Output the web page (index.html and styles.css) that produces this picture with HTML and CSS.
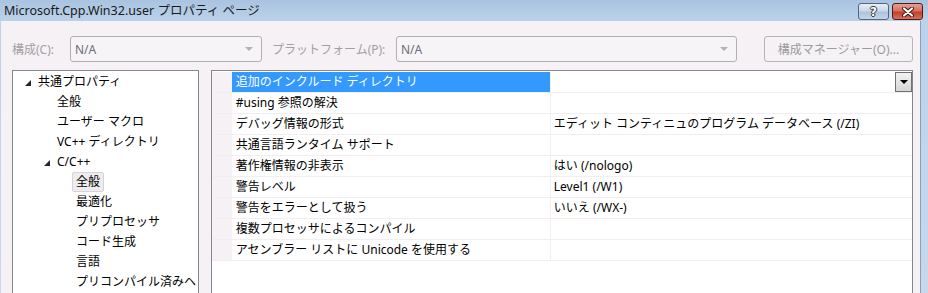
FILE: index.html
```html
<!DOCTYPE html>
<html lang="ja">
<head>
    <meta charset="UTF-8">
    <title>Microsoft.Cpp.Win32.user プロパティ ページ</title>
    <link rel="stylesheet" href="styles.css">
</head>
<body>
    <div class="window">
        <div class="titlebar">
            <span class="title">Microsoft.Cpp.Win32.user プロパティ ページ</span>
            <div class="caption-buttons">
                <button class="cap-btn help">?</button>
                <button class="cap-btn close">
                    <svg width="14" height="10" viewBox="0 0 14 10">
                        <path d="M3 1.5 L11 8.5 M11 1.5 L3 8.5" stroke="#3a1410" stroke-width="4" stroke-linecap="round"/>
                        <path d="M3 1.5 L11 8.5 M11 1.5 L3 8.5" stroke="#fff" stroke-width="2.2" stroke-linecap="round"/>
                    </svg>
                </button>
            </div>
        </div>
        <div class="client">
            <div class="toolbar">
                <span class="label config-label">構成(C):</span>
                <div class="combo config"><span>N/A</span><i class="arrow"></i></div>
                <span class="label platform-label">プラットフォーム(P):</span>
                <div class="combo platform"><span>N/A</span><i class="arrow"></i></div>
                <button class="manager">構成マネージャー(O)...</button>
            </div>
            <div class="panels">
                <div class="tree">
                    <div class="node lvl0"><i class="slot expander"></i>共通プロパティ</div>
                    <div class="node lvl1"><i class="slot"></i>全般</div>
                    <div class="node lvl1"><i class="slot"></i>ユーザー マクロ</div>
                    <div class="node lvl1"><i class="slot"></i>VC++ ディレクトリ</div>
                    <div class="node lvl1"><i class="slot expander"></i>C/C++</div>
                    <div class="node lvl2"><i class="slot"></i><span class="current">全般</span></div>
                    <div class="node lvl2"><i class="slot"></i>最適化</div>
                    <div class="node lvl2"><i class="slot"></i>プリプロセッサ</div>
                    <div class="node lvl2"><i class="slot"></i>コード生成</div>
                    <div class="node lvl2"><i class="slot"></i>言語</div>
                    <div class="node lvl2"><i class="slot"></i>プリコンパイル済みヘ</div>
                </div>
                <div class="grid">
                    <div class="rows">
                        <div class="row selected">
                            <div class="gutter"></div>
                            <div class="name">追加のインクルード ディレクトリ</div>
                            <div class="value"><button class="drop"><i></i></button></div>
                        </div>
                        <div class="row">
                            <div class="gutter"></div>
                            <div class="name">#using 参照の解決</div>
                            <div class="value"></div>
                        </div>
                        <div class="row">
                            <div class="gutter"></div>
                            <div class="name">デバッグ情報の形式</div>
                            <div class="value">エディット コンティニュのプログラム データベース (/ZI)</div>
                        </div>
                        <div class="row">
                            <div class="gutter"></div>
                            <div class="name">共通言語ランタイム サポート</div>
                            <div class="value"></div>
                        </div>
                        <div class="row">
                            <div class="gutter"></div>
                            <div class="name">著作権情報の非表示</div>
                            <div class="value">はい (/nologo)</div>
                        </div>
                        <div class="row">
                            <div class="gutter"></div>
                            <div class="name">警告レベル</div>
                            <div class="value">Level1 (/W1)</div>
                        </div>
                        <div class="row">
                            <div class="gutter"></div>
                            <div class="name">警告をエラーとして扱う</div>
                            <div class="value">いいえ (/WX-)</div>
                        </div>
                        <div class="row">
                            <div class="gutter"></div>
                            <div class="name">複数プロセッサによるコンパイル</div>
                            <div class="value"></div>
                        </div>
                        <div class="row">
                            <div class="gutter"></div>
                            <div class="name">アセンブラー リストに Unicode を使用する</div>
                            <div class="value"></div>
                        </div>
                    </div>
                </div>
            </div>
        </div>
    </div>
</body>
</html>
```

FILE: styles.css
```css
body {
    margin: 0;
    padding: 0;
    font-family: "Noto Sans", "Noto Sans CJK JP", sans-serif;
    font-size: 12px;
    color: #000;
    overflow: hidden;
}

.window {
    width: 928px;
    height: 293px;
    display: flex;
    flex-direction: column;
    background: linear-gradient(to bottom, #a9c3e0 0, #bcd2ea 21px, #c7d8ec 100%);
    overflow: hidden;
}

.titlebar {
    height: 21px;
    flex: none;
    display: flex;
    align-items: center;
    padding-left: 4px;
}

.title {
    color: #1a1a1a;
    font-size: 12.5px;
    line-height: 21px;
    white-space: nowrap;
}

.caption-buttons {
    margin-left: auto;
    display: flex;
    gap: 3px;
    padding-right: 5px;
    align-self: flex-start;
    padding-top: 3px;
}

.cap-btn {
    width: 31px;
    height: 17px;
    border: 1px solid #55657c;
    border-radius: 3px;
    padding: 0;
    display: flex;
    align-items: center;
    justify-content: center;
    box-sizing: border-box;
}

.help {
    background: linear-gradient(to bottom, #e7eef7 0%, #c9d8ea 45%, #aec3dc 55%, #c3d5ea 100%);
    color: #fff;
    font-family: "DejaVu Sans", sans-serif;
    font-weight: bold;
    font-size: 12px;
    line-height: 14px;
    text-shadow: 1px 0 #333, -1px 0 #333, 0 1px #333, 0 -1px #333;
}

.close {
    border-color: #4f1c16;
    background: linear-gradient(to bottom, #e6a093 0%, #d8705f 45%, #c4402c 55%, #d6705c 100%);
}

.client {
    flex: 1;
    background: #f5f1f5;
    margin-left: 1px;
    margin-right: 7px;
    border-right: 1px solid #8e9fb5;
    padding: 15px 7px 0 11px;
    display: flex;
    flex-direction: column;
    min-height: 0;
}

.toolbar {
    display: flex;
    align-items: center;
    height: 26px;
    flex: none;
}

.label {
    color: #a3a0a3;
    white-space: nowrap;
}

.config-label {
    width: 58px;
}

.combo {
    height: 26px;
    box-sizing: border-box;
    border: 1px solid #b2afb2;
    border-radius: 3px;
    background: #f7f4f7;
    display: flex;
    align-items: center;
    padding-left: 4px;
    color: #6e6e78;
}

.combo.config {
    width: 192px;
}

.platform-label {
    margin-left: 10px;
    width: 124px;
}

.combo.platform {
    width: 341px;
}

.arrow {
    margin-left: auto;
    margin-right: 8px;
    width: 0;
    height: 0;
    border-left: 4px solid transparent;
    border-right: 4px solid transparent;
    border-top: 4px solid #b4b1b4;
}

.manager {
    margin-left: 27px;
    width: 149px;
    height: 26px;
    border: 1px solid #b7b4b7;
    border-radius: 3px;
    background: #f5f2f5;
    color: #9d9a9d;
    font-family: inherit;
    font-size: 12px;
    padding: 0;
}

.panels {
    display: flex;
    margin-top: 8px;
    gap: 12px;
    flex: 1;
    min-height: 0;
}

.tree {
    width: 187px;
    box-sizing: border-box;
    border: 1px solid #828790;
    border-bottom: none;
    background: #fff;
    padding-top: 1px;
    overflow: hidden;
}

.node {
    height: 20px;
    line-height: 20px;
    white-space: nowrap;
    display: flex;
    align-items: center;
}

.lvl0 { padding-left: 12px; }
.lvl1 { padding-left: 31px; }
.lvl2 { padding-left: 50px; }

.slot {
    width: 13px;
    flex: none;
}

.expander {
    width: 0;
    height: 0;
    border-left: 6px solid transparent;
    border-bottom: 6px solid #262626;
    margin-right: 7px;
    margin-top: 1px;
}

.current {
    display: inline-block;
    height: 18px;
    line-height: 17px;
    padding: 0 3px;
    margin-left: -4px;
    border: 1px solid #d6d3d6;
    border-radius: 2px;
    background: #eeecee;
}

.grid {
    width: 703px;
    box-sizing: border-box;
    border: 1px solid #828790;
    border-bottom: none;
    background: #fff;
}

.rows {
    padding-top: 1px;
}

.row {
    display: flex;
    height: 21px;
    box-sizing: border-box;
    border-bottom: 1px solid #f1eef1;
    line-height: 20px;
}

.gutter {
    width: 20px;
    flex: none;
    background: #f5f1f5;
}

.row .name {
    width: 318px;
    flex: none;
    padding-left: 4px;
    box-sizing: border-box;
    white-space: nowrap;
    overflow: hidden;
}

.row.selected .name {
    background: #3399ff;
    color: #fff;
}

.row .value {
    flex: 1;
    display: flex;
    border-left: 1px solid #f1eef1;
    padding-left: 3px;
    white-space: nowrap;
}

.drop {
    margin-left: auto;
    width: 17px;
    height: 20px;
    box-sizing: border-box;
    border: 1px solid #707070;
    background: linear-gradient(to bottom, #f2f2f2, #d6d6d6);
    padding: 0;
    display: flex;
    align-items: center;
    justify-content: center;
}

.drop i {
    width: 0;
    height: 0;
    border-left: 4px solid transparent;
    border-right: 4px solid transparent;
    border-top: 4px solid #000;
}
```
